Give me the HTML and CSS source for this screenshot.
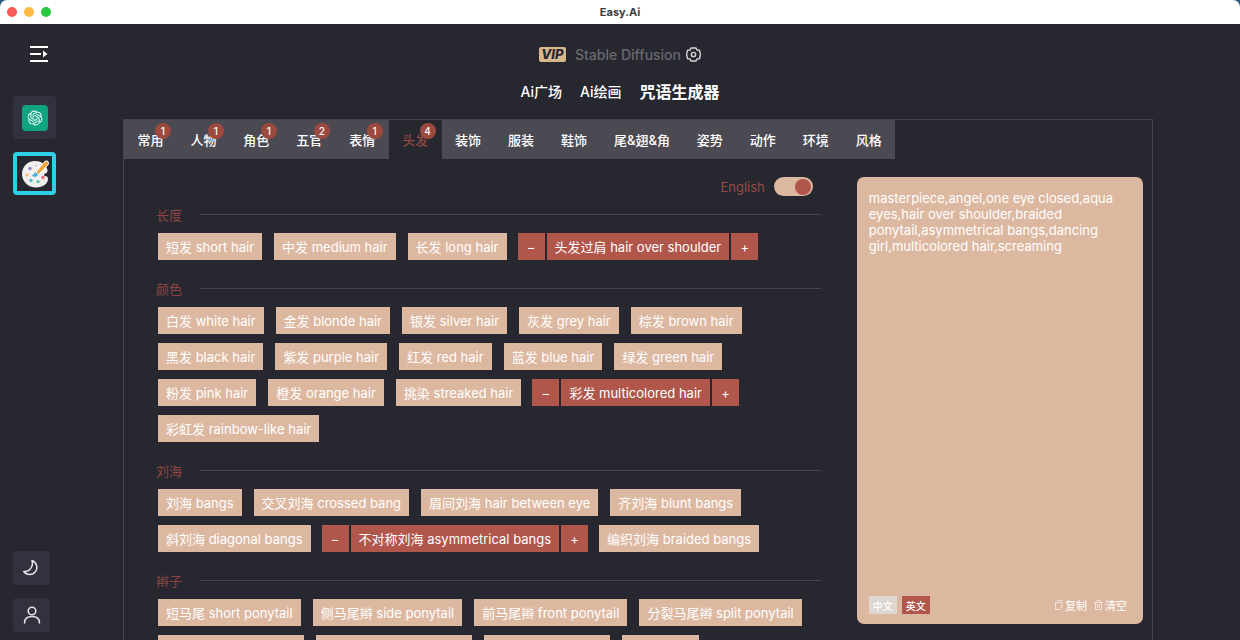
FILE: index.html
```html
<!DOCTYPE html>
<html lang="zh-CN">
<head>
    <meta charset="UTF-8">
    <meta name="viewport" content="width=device-width, initial-scale=1.0">
    <title>Easy.Ai</title>
    <link rel="stylesheet" href="styles.css">
</head>
<body>
    <header class="titlebar">
        <span class="dot dot-close"></span>
        <span class="dot dot-min"></span>
        <span class="dot dot-max"></span>
        <span class="window-title">Easy.Ai</span>
    </header>

    <div class="app">
        <!-- 侧边栏 -->
        <aside class="sidebar">
            <button class="menu-btn" aria-label="菜单">
                <svg width="20" height="18" viewBox="0 0 20 18" fill="none" stroke="#fff" stroke-width="1.800">
                    <path d="M1 2h18M1 9h11M1 16h18"/>
                    <path d="M14 5.500l4.500 3.500-4.500 3.500z" fill="#fff" stroke="none"/>
                </svg>
            </button>
            <button class="side-item" aria-label="ChatGPT">
                <svg width="26" height="26" viewBox="0 0 26 26">
                    <rect width="26" height="26" rx="4" fill="#10a37f"/>
                    <g transform="translate(5.500 5.500) scale(.625)" fill="#fff">
                        <path d="M22.282 9.821a5.985 5.985 0 0 0-.516-4.910 6.046 6.046 0 0 0-6.510-2.900A6.065 6.065 0 0 0 4.981 4.182a5.985 5.985 0 0 0-3.998 2.900 6.046 6.046 0 0 0 .743 7.097 5.980 5.980 0 0 0 .511 4.911 6.051 6.051 0 0 0 6.515 2.900A5.985 5.985 0 0 0 13.260 24a6.056 6.056 0 0 0 5.772-4.206 5.990 5.990 0 0 0 3.998-2.900 6.056 6.056 0 0 0-.748-7.073zM13.260 22.430a4.476 4.476 0 0 1-2.876-1.040l.141-.081 4.779-2.758a.795.795 0 0 0 .393-.681v-6.737l2.020 1.169a.071.071 0 0 1 .038.052v5.583a4.504 4.504 0 0 1-4.495 4.493zM3.600 18.304a4.471 4.471 0 0 1-.535-3.014l.142.085 4.783 2.759a.771.771 0 0 0 .781 0l5.843-3.369v2.332a.080.080 0 0 1-.033.062L9.740 19.950a4.499 4.499 0 0 1-6.140-1.646zM2.341 7.896a4.485 4.485 0 0 1 2.366-1.973V11.600a.766.766 0 0 0 .388.677l5.814 3.354-2.020 1.169a.076.076 0 0 1-.071 0l-4.830-2.787A4.504 4.504 0 0 1 2.341 7.872zm16.597 3.855l-5.833-3.387L15.119 7.200a.076.076 0 0 1 .071 0l4.830 2.791a4.494 4.494 0 0 1-.676 8.105v-5.678a.790.790 0 0 0-.407-.667zm2.010-3.023l-.141-.085-4.774-2.782a.776.776 0 0 0-.785 0L9.409 9.230V6.897a.066.066 0 0 1 .028-.061l4.830-2.787a4.499 4.499 0 0 1 6.680 4.660zm-12.640 4.135l-2.020-1.164a.080.080 0 0 1-.038-.057V6.075a4.499 4.499 0 0 1 7.376-3.454l-.142.081L8.704 5.460a.795.795 0 0 0-.393.681zm1.098-2.365l2.602-1.500 2.607 1.500v2.999l-2.597 1.500-2.607-1.500z"/>
                    </g>
                </svg>
            </button>
            <button class="side-item active" aria-label="绘画">
                <svg width="28" height="28" viewBox="0 0 28 28">
                    <path d="M14 1C6.500 1 1 6.800 1 14s6 13.500 14 13.500c7 0 12-4 12-8.500 0-2-1-3-3-3-1.500 0-1-2 .5-2.500 2-1 2.500-2.500 1.700-4.500C24.500 4.500 20 1 14 1z" fill="#f3efee"/>
                    <circle cx="9" cy="8.500" r="1.700" fill="#8d86c9"/>
                    <circle cx="15" cy="5.500" r="1.500" fill="#d9d5e6"/>
                    <circle cx="6" cy="15" r="1.600" fill="#f0c05a"/>
                    <circle cx="10" cy="20.500" r="1.700" fill="#45bfd0"/>
                    <circle cx="17" cy="21.500" r="1.600" fill="#4cc3a5"/>
                    <circle cx="22" cy="17.500" r="1.700" fill="#ee6b6e"/>
                    <path d="M11 15c1 3 5.500 2.500 6-1l-2-2c-1.500 0-1.500 3-4 3z" fill="#4ab0d8"/>
                    <path d="M15 12l2.500 2.500 9-9c1.300-1.400 1.500-3 .5-4s-3-.6-4 .8z" fill="#f0a63c" stroke="#fff" stroke-width="1"/>
                </svg>
            </button>
            <div class="side-bottom">
                <button class="side-small" aria-label="深色模式">
                    <svg width="18" height="18" viewBox="0 0 18 18" fill="none" stroke="#e6e6ea" stroke-width="1.500" stroke-linejoin="round">
                        <path d="M9 1.500a7.200 7.200 0 1 1-8.200 11C6 13 11 8 9 1.500z"/>
                    </svg>
                </button>
                <button class="side-small" aria-label="用户">
                    <svg width="18" height="18" viewBox="0 0 18 18" fill="none" stroke="#e6e6ea" stroke-width="1.500" stroke-linecap="round">
                        <circle cx="9" cy="5" r="3.800"/>
                        <path d="M1.500 17c0-4.500 3.300-6.500 7.500-6.500s7.500 2 7.500 6.500"/>
                    </svg>
                </button>
            </div>
        </aside>

        <!-- 顶部 -->
        <div class="top">
            <div class="model">
                <span class="vip">VIP</span>
                <span class="model-name">Stable Diffusion</span>
                <button class="setting-btn" aria-label="设置">
                    <svg width="15" height="15" viewBox="0 0 16 16" fill="none" stroke="#d6d6da" stroke-width="1.500" stroke-linejoin="round">
                        <path d="M5.300 1h5.400l1.100 2.300 2.500.2L15.500 8l-1.200 4.500-2.500.2L10.700 15H5.300l-1.100-2.300-2.500-.2L.5 8l1.200-4.500 2.500-.2z"/>
                        <circle cx="8" cy="8" r="2.300"/>
                    </svg>
                </button>
            </div>
            <nav class="nav">
                <a href="#">Ai广场</a>
                <a href="#">Ai绘画</a>
                <a href="#" class="current">咒语生成器</a>
            </nav>
        </div>

        <!-- 咒语生成器 -->
        <main class="panel">
            <div class="tabs">
                <button class="tab">常用<i class="badge">1</i></button>
                <button class="tab">人物<i class="badge">1</i></button>
                <button class="tab">角色<i class="badge">1</i></button>
                <button class="tab">五官<i class="badge">2</i></button>
                <button class="tab">表情<i class="badge">1</i></button>
                <button class="tab active">头发<i class="badge">4</i></button>
                <button class="tab">装饰</button>
                <button class="tab">服装</button>
                <button class="tab">鞋饰</button>
                <button class="tab">尾&amp;翅&amp;角</button>
                <button class="tab">姿势</button>
                <button class="tab">动作</button>
                <button class="tab">环境</button>
                <button class="tab">风格</button>
            </div>

            <div class="content">
                <div class="words">
                    <label class="lang">English <input type="checkbox" class="switch" checked></label>

                    <h3 class="group-title">长度</h3>
                    <div class="chips">
                        <button class="chip">短发 short hair</button>
                        <button class="chip">中发 medium hair</button>
                        <button class="chip">长发 long hair</button>
                        <div class="picked">
                            <button class="step">−</button>
                            <button>头发过肩 hair over shoulder</button>
                            <button class="step">+</button>
                        </div>
                    </div>

                    <h3 class="group-title">颜色</h3>
                    <div class="chips">
                        <button class="chip">白发 white hair</button>
                        <button class="chip">金发 blonde hair</button>
                        <button class="chip">银发 silver hair</button>
                        <button class="chip">灰发 grey hair</button>
                        <button class="chip">棕发 brown hair</button>
                        <button class="chip">黑发 black hair</button>
                        <button class="chip">紫发 purple hair</button>
                        <button class="chip">红发 red hair</button>
                        <button class="chip">蓝发 blue hair</button>
                        <button class="chip">绿发 green hair</button>
                        <button class="chip">粉发 pink hair</button>
                        <button class="chip">橙发 orange hair</button>
                        <button class="chip">挑染 streaked hair</button>
                        <div class="picked">
                            <button class="step">−</button>
                            <button>彩发 multicolored hair</button>
                            <button class="step">+</button>
                        </div>
                        <button class="chip">彩虹发 rainbow-like hair</button>
                    </div>

                    <h3 class="group-title">刘海</h3>
                    <div class="chips">
                        <button class="chip">刘海 bangs</button>
                        <button class="chip">交叉刘海 crossed bang</button>
                        <button class="chip">眉间刘海 hair between eye</button>
                        <button class="chip">齐刘海 blunt bangs</button>
                        <button class="chip">斜刘海 diagonal bangs</button>
                        <div class="picked">
                            <button class="step">−</button>
                            <button>不对称刘海 asymmetrical bangs</button>
                            <button class="step">+</button>
                        </div>
                        <button class="chip">编织刘海 braided bangs</button>
                    </div>

                    <h3 class="group-title">辫子</h3>
                    <div class="chips">
                        <button class="chip">短马尾 short ponytail</button>
                        <button class="chip">侧马尾辫 side ponytail</button>
                        <button class="chip">前马尾辫 front ponytail</button>
                        <button class="chip">分裂马尾辫 split ponytail</button>
                        <button class="chip">法式辫子 french braid</button>
                        <button class="chip">辫子马尾 braid ponytail</button>
                        <button class="chip">双辫子 twin braids</button>
                        <button class="chip">辫子 braid</button>
                    </div>
                </div>

                <div class="result">
                    <textarea class="result-text" aria-label="咒语" spellcheck="false">masterpiece,angel,one eye closed,aqua eyes,hair over shoulder,braided ponytail,asymmetrical bangs,dancing girl,multicolored hair,screaming</textarea>
                    <div class="result-bar">
                        <button class="lang-btn">中文</button>
                        <button class="lang-btn on">英文</button>
                        <button class="act act-copy">
                            <svg width="9" height="10" viewBox="0 0 9 10" fill="none" stroke="#f3e3d9" stroke-width="1">
                                <path d="M6.500 9.500h-5v-7h5M3 .5h5v7H6.500"/>
                            </svg>复制
                        </button>
                        <button class="act">
                            <svg width="9" height="10" viewBox="0 0 9 10" fill="none" stroke="#f3e3d9" stroke-width="1">
                                <path d="M0 2.500h9M3 2V.5h3V2M1.500 2.500v7h6v-7M3.500 4v4M5.500 4v4"/>
                            </svg>清空
                        </button>
                    </div>
                </div>
            </div>
        </main>
    </div>
</body>
</html>
```
FILE: styles.css
```css
* {
    box-sizing: border-box;
}
html {
    background: #2a5a80;
}
body {
    margin: 0;
    height: 100vh;
    display: flex;
    flex-direction: column;
    overflow: hidden;
    color: #fff;
    font-family: Inter, "Noto Sans CJK SC", sans-serif;
    font-size: 13px;
}
button {
    border: none;
    padding: 0;
    background: none;
    color: inherit;
    font: inherit;
    cursor: pointer;
}
svg {
    display: block;
}

/* 窗口标题栏 */
.titlebar {
    flex: none;
    height: 24px;
    padding: 0 7px;
    display: flex;
    align-items: center;
    gap: 7px;
    background: #fff;
    border-radius: 7px 7px 0 0;
    position: relative;
}
.dot {
    width: 10px;
    height: 10px;
    border-radius: 50%;
}
.dot-close { background: #fc5b57; }
.dot-min { background: #fdbc40; }
.dot-max { background: #28c840; }
.window-title {
    position: absolute;
    left: 0;
    right: 0;
    text-align: center;
    color: #3c3c3c;
    font-size: 11px;
    font-weight: 700;
}

.app {
    flex: 1;
    min-height: 0;
    display: grid;
    grid-template-columns: 123px 1fr 87px;
    grid-template-rows: 95px 1fr;
    background: #26272f;
}

/* 侧边栏 */
.sidebar {
    grid-column: 1;
    grid-row: 1 / 3;
    padding: 20px 0 8px 13px;
    display: flex;
    flex-direction: column;
    align-items: flex-start;
}
.menu-btn {
    margin: 0 0 32px 16px;
    padding: 1px 0;
}
.side-item {
    width: 43px;
    height: 43px;
    margin-bottom: 13px;
    display: flex;
    align-items: center;
    justify-content: center;
    border-radius: 4px;
    background: #32323f;
}
.side-item.active {
    border: 4px solid #2fcfe6;
    background: #26272f;
}
.side-bottom {
    margin-top: auto;
    display: flex;
    flex-direction: column;
    gap: 13px;
}
.side-small {
    width: 37px;
    height: 34px;
    display: flex;
    align-items: center;
    justify-content: center;
    border-radius: 4px;
    background: #32323f;
}

/* 顶部 */
.top {
    grid-column: 1 / -1;
    grid-row: 1;
    display: flex;
    flex-direction: column;
    align-items: center;
    justify-self: center;
    padding-top: 20px;
}
.model {
    display: flex;
    align-items: center;
    height: 20px;
}
.vip {
    width: 27px;
    height: 15px;
    line-height: 15px;
    margin-right: 9px;
    text-align: center;
    border-radius: 2px;
    background: #d9b98c;
    color: #26272f;
    font-size: 13px;
    font-style: italic;
    font-weight: 800;
}
.model-name {
    margin-right: 5px;
    color: #6a6a6e;
    font-size: 14px;
    font-weight: 500;
}
.nav {
    display: flex;
    align-items: center;
    gap: 18px;
    margin-top: 15px;
    height: 24px;
    font-size: 14px;
    font-weight: 500;
}
.nav a {
    color: #fff;
    text-decoration: none;
}
.nav .current {
    font-size: 16px;
    font-weight: 700;
}

/* 主面板 */
.panel {
    grid-column: 2;
    grid-row: 2;
    min-height: 0;
    display: flex;
    flex-direction: column;
    border: 1px solid #45454e;
    border-bottom: none;
}
.tabs {
    flex: none;
    width: 75%;
    display: flex;
    background: #4b4a53;
}
.tab {
    position: relative;
    flex: 1 0 auto;
    height: 39px;
    padding: 0 13px;
    font-weight: 500;
}
.tab.active {
    background: #26272f;
    color: #8f4643;
}
.badge {
    position: absolute;
    top: 3px;
    right: 6px;
    width: 16px;
    height: 16px;
    line-height: 16px;
    border-radius: 50%;
    background: #9c493f;
    color: #fff;
    font-size: 10px;
    font-style: normal;
    text-align: center;
}
.content {
    flex: 1;
    min-height: 0;
    display: flex;
    padding: 18px 9px 0 32px;
    gap: 36px;
}
.words {
    flex: 1;
    min-width: 0;
    overflow: hidden;
}
.lang {
    display: flex;
    align-items: center;
    justify-content: flex-end;
    gap: 9px;
    height: 19px;
    padding-right: 8px;
    color: #9c4a46;
}
.switch {
    appearance: none;
    width: 39px;
    height: 19px;
    margin: 0;
    padding: 0 2px;
    display: flex;
    align-items: center;
    border-radius: 10px;
    background: #ddb8a1;
}
.switch::before {
    content: "";
    width: 16px;
    height: 16px;
    border-radius: 50%;
    background: #b0564b;
}
.switch:checked {
    justify-content: flex-end;
}
.group-title {
    display: flex;
    align-items: center;
    gap: 18px;
    height: 16px;
    margin: 20px 0 11px;
    color: #8f4643;
    font-size: 13px;
    font-weight: 400;
}
.lang + .group-title {
    margin-top: 10px;
}
.group-title::after {
    content: "";
    flex: 1;
    height: 1px;
    background: #45454e;
}
.chips {
    display: flex;
    flex-wrap: wrap;
    gap: 9px 10px;
    padding-left: 1px;
}
.chip {
    height: 27px;
    margin: 0 1px;
    padding: 0 8px;
    background: #ddb8a1;
}
.picked {
    display: flex;
    gap: 2px;
}
.picked button {
    height: 27px;
    padding: 0 8px;
    background: #b0564b;
}
.picked .step {
    width: 27px;
}

/* 结果 */
.result {
    flex: none;
    width: 29%;
    margin-bottom: 16px;
    display: flex;
    flex-direction: column;
    padding: 13px 12px 10px;
    border-radius: 7px;
    background: #ddb8a1;
}
.result-text {
    flex: 1;
    padding: 0;
    border: none;
    outline: none;
    resize: none;
    background: none;
    color: #fff;
    font: inherit;
    line-height: 16px;
}
.result-bar {
    display: flex;
    align-items: center;
    padding-right: 4px;
    font-size: 10px;
}
.lang-btn {
    width: 28px;
    height: 18px;
    margin-right: 5px;
    background: #ddd6d1;
    font-weight: 500;
}
.lang-btn.on {
    background: #b0564b;
}
.act {
    display: flex;
    align-items: center;
    gap: 2px;
    margin-left: 7px;
    font-size: 11px;
}
.act-copy {
    margin-left: auto;
}
```
